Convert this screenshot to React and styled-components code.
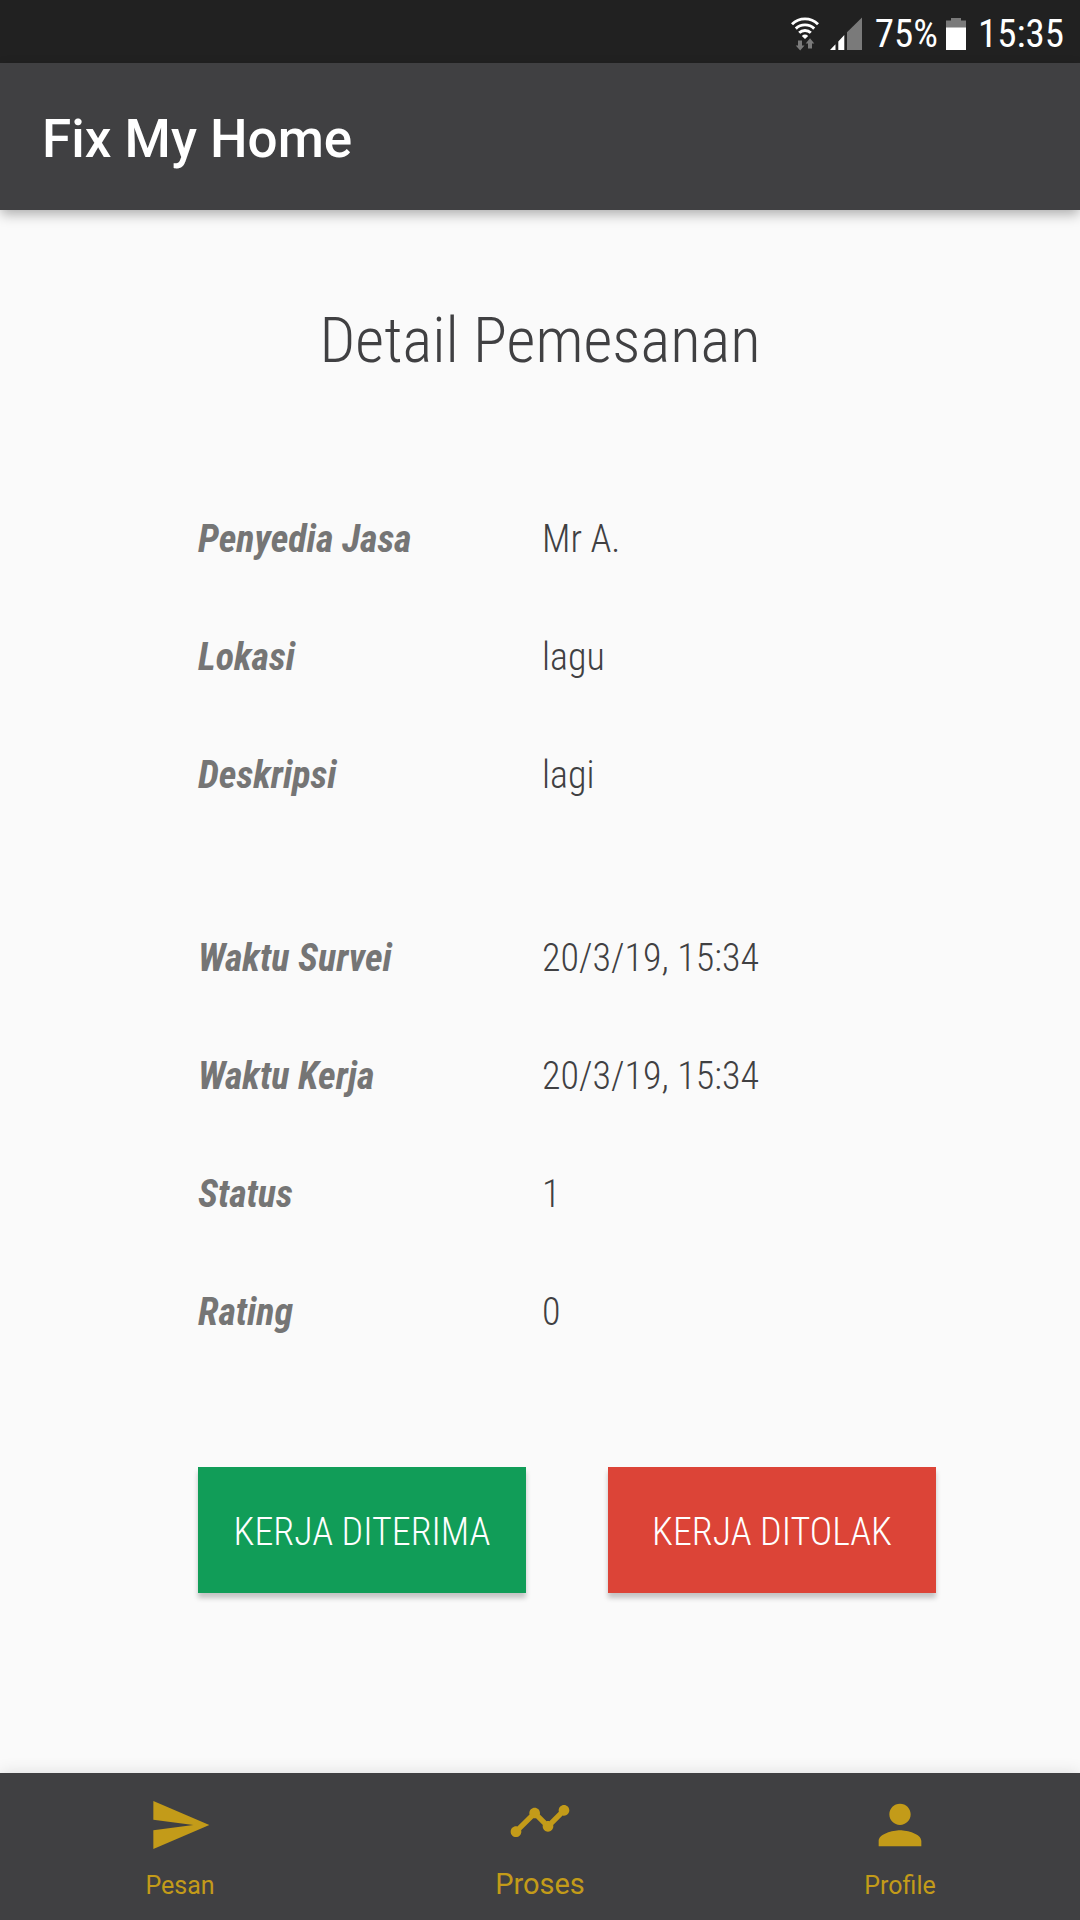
import React from "react";
import styled, { createGlobalStyle } from "styled-components";
import { MdSend, MdTimeline, MdPerson } from "react-icons/md";

const GlobalStyle = createGlobalStyle`
  *, *::before, *::after { box-sizing: border-box; }
  body { margin: 0; background: #fafafa; }
`;

const condensed = `"Roboto Condensed", Roboto, "Liberation Sans", sans-serif`;

const Screen = styled.div`
  display: flex;
  flex-direction: column;
  min-height: 100vh;
  color: #404042;
  background: #fafafa;
  font-family: Roboto, "Liberation Sans", sans-serif;
`;

const StatusBar = styled.div`
  display: flex;
  align-items: center;
  justify-content: flex-end;
  height: 63px;
  padding: 5px 16px 0 0;
  color: #fff;
  background: #212121;
  font-family: ${condensed};
  font-size: 39px;
  line-height: 46px;
`;

const StatusIcon = styled.svg`
  flex: none;
  margin-right: ${(p) => p.$gap}px;
`;

const StatusText = styled.span`
  margin-right: ${(p) => p.$gap || 0}px;
`;

const AppBar = styled.header`
  display: flex;
  align-items: center;
  height: 147px;
  padding: 4px 42px 0;
  color: #fff;
  background: #404042;
  box-shadow: 0 5px 12px -1px rgba(0, 0, 0, 0.32);
`;

const AppTitle = styled.div`
  font-size: 53px;
  font-weight: 500;
  line-height: 62px;
`;

const Main = styled.main`
  flex: 1;
  padding: 94px 144px 0 198px;
`;

const Heading = styled.h1`
  margin: 0 0 139px -54px;
  font-family: ${condensed};
  font-size: 63px;
  font-weight: 300;
  line-height: 74px;
  text-align: center;
`;

const Details = styled.dl`
  display: grid;
  grid-template-columns: 344px 1fr;
  row-gap: 74px;
  margin: 0 0 ${(p) => p.$after}px;
  font-family: ${condensed};
  font-size: 38px;
  line-height: 44px;
`;

const Label = styled.dt`
  color: #757575;
  font-style: italic;
  font-weight: 700;
`;

const Value = styled.dd`
  margin: 0;
  font-weight: 300;
`;

const Actions = styled.div`
  display: grid;
  grid-template-columns: 1fr 1fr;
  gap: 82px;
`;

const ActionButton = styled.button`
  height: 126px;
  padding: 4px 0 0;
  border: 0;
  color: #fff;
  background: ${(p) => p.$color};
  box-shadow: 0 5px 5px rgba(0, 0, 0, 0.22);
  font-family: ${condensed};
  font-size: 38px;
  font-weight: 300;
  line-height: 44px;
  white-space: nowrap;
`;

const BottomNav = styled.nav`
  display: flex;
  height: 147px;
  background: #404042;
  box-shadow: 0 0 16px rgba(0, 0, 0, 0.12);
`;

const NavItem = styled.a`
  display: flex;
  flex: 1;
  flex-direction: column;
  align-items: center;
  justify-content: space-between;
  padding: ${(p) => (p.$active ? 16 : 20)}px 0 18px;
  color: #c39b19;
  font-size: ${(p) => (p.$active ? 29 : 25)}px;
  line-height: ${(p) => (p.$active ? 36 : 32)}px;
  text-decoration: none;
`;

const orderRows = [
  ["Penyedia Jasa", "Mr A."],
  ["Lokasi", "lagu"],
  ["Deskripsi", "lagi"],
];

const progressRows = [
  ["Waktu Survei", "20/3/19, 15:34"],
  ["Waktu Kerja", "20/3/19, 15:34"],
  ["Status", "1"],
  ["Rating", "0"],
];

function DetailList({ rows, after }) {
  return (
    <Details $after={after}>
      {rows.map(([label, value]) => (
        <React.Fragment key={label}>
          <Label>{label}</Label>
          <Value>{value}</Value>
        </React.Fragment>
      ))}
    </Details>
  );
}

function WifiIcon() {
  return (
    <StatusIcon $gap={11} width="28" height="34" viewBox="0 0 28 34" aria-hidden="true">
      <g fill="none" stroke="#fff" strokeWidth="2.9">
        <path d="M1 7.2a18.6 18.6 0 0 1 26 0" />
        <path d="M4.8 11.6a13.2 13.2 0 0 1 18.4 0" />
        <path d="M8.2 15.8a8.4 8.4 0 0 1 11.6 0" />
      </g>
      <path d="M10.8 18.9a5 5 0 0 1 6.4 0L14 22z" fill="#fff" />
      <path d="M7 23.5h4v5h2.5L9.2 33.5 4.7 28.5H7zM17 31.5v-5h-2.3L19 21.3l4.3 5.2H21v5z" fill="#7a7a7a" />
    </StatusIcon>
  );
}

function SignalIcon() {
  return (
    <StatusIcon $gap={13} width="32" height="34" viewBox="0 0 32 34" aria-hidden="true">
      <path d="M0 33l5.5-5.8V33zM8.3 24.4l6-6.3V33h-6z" fill="#fff" />
      <path d="M17 15.3L32 .5V33H17z" fill="#7a7a7a" />
    </StatusIcon>
  );
}

function BatteryIcon() {
  return (
    <StatusIcon $gap={12} width="20" height="34" viewBox="0 0 20 34" aria-hidden="true">
      <path d="M5 1h10v2.5h5V11H0V3.5h5z" fill="#7a7a7a" />
      <path d="M0 10.5h20V33H0z" fill="#fff" />
    </StatusIcon>
  );
}

export default function App() {
  return (
    <Screen>
      <GlobalStyle />
      <StatusBar>
        <WifiIcon />
        <SignalIcon />
        <StatusText $gap={8}>75%</StatusText>
        <BatteryIcon />
        <StatusText>15:35</StatusText>
      </StatusBar>
      <AppBar>
        <AppTitle>Fix My Home</AppTitle>
      </AppBar>
      <Main>
        <Heading>Detail Pemesanan</Heading>
        <DetailList rows={orderRows} after={139} />
        <DetailList rows={progressRows} after={133} />
        <Actions>
          <ActionButton type="button" $color="#119d58">KERJA DITERIMA</ActionButton>
          <ActionButton type="button" $color="#dc4437">KERJA DITOLAK</ActionButton>
        </Actions>
      </Main>
      <BottomNav>
        <NavItem href="#pesan"><MdSend size={64} aria-hidden="true" />Pesan</NavItem>
        <NavItem href="#proses" $active aria-current="page"><MdTimeline size={64} aria-hidden="true" />Proses</NavItem>
        <NavItem href="#profile"><MdPerson size={64} aria-hidden="true" />Profile</NavItem>
      </BottomNav>
    </Screen>
  );
}
